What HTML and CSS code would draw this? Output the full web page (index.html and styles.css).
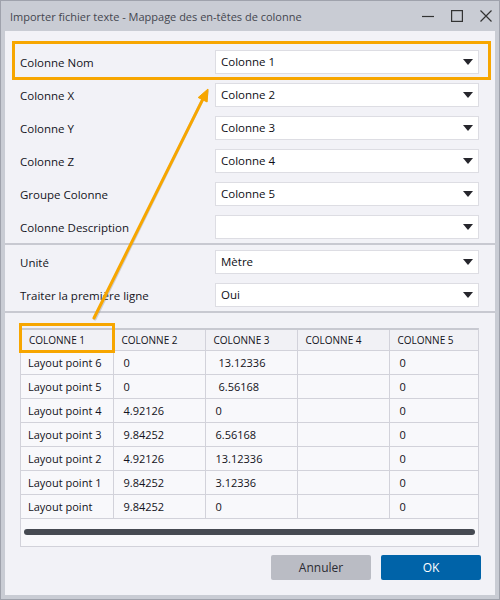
FILE: index.html
```html
<!DOCTYPE html>
<html lang="fr">
  <head>
    <meta charset="UTF-8" />
    <meta name="viewport" content="width=device-width, initial-scale=1.0" />
    <title>Importer fichier texte</title>
    <link rel="stylesheet" href="styles.css">
  </head>
  <body>
    <div class="window">
      <div class="titlebar">
        <span class="title">Importer fichier texte - Mappage des en-têtes de colonne</span>
        <div class="controls">
          <svg width="12" height="12" viewBox="0 0 12 12"><path d="M0 6.5h12" stroke="#333" stroke-width="1.2"/></svg>
          <svg width="12" height="12" viewBox="0 0 12 12"><rect x="0.6" y="0.6" width="10.8" height="10.8" fill="none" stroke="#333" stroke-width="1.2"/></svg>
          <svg width="12" height="12" viewBox="0 0 12 12"><path d="M0.5 0.5l11 11M11.5 0.5l-11 11" stroke="#333" stroke-width="1.2"/></svg>
        </div>
      </div>

      <div class="content">
        <div class="fields">
          <div class="row"><label>Colonne Nom</label><div class="select">Colonne 1</div></div>
          <div class="row"><label>Colonne X</label><div class="select">Colonne 2</div></div>
          <div class="row"><label>Colonne Y</label><div class="select">Colonne 3</div></div>
          <div class="row"><label>Colonne Z</label><div class="select">Colonne 4</div></div>
          <div class="row"><label>Groupe Colonne</label><div class="select">Colonne 5</div></div>
          <div class="row"><label>Colonne Description</label><div class="select"></div></div>
        </div>

        <div class="sep"></div>

        <div class="fields options">
          <div class="row"><label>Unité</label><div class="select">Mètre</div></div>
          <div class="row"><label>Traiter la première ligne</label><div class="select">Oui</div></div>
        </div>

        <div class="sep"></div>

        <div class="grid">
          <table>
            <colgroup><col class="c"><col class="c"><col class="c"><col class="c"><col></colgroup>
            <thead>
              <tr><th>COLONNE 1</th><th>COLONNE 2</th><th>COLONNE 3</th><th>COLONNE 4</th><th>COLONNE 5</th></tr>
            </thead>
            <tbody>
              <tr><td class="first">Layout point 6</td><td>0</td><td class="ind">13.12336</td><td></td><td>0</td></tr>
              <tr><td class="first">Layout point 5</td><td>0</td><td class="ind">6.56168</td><td></td><td>0</td></tr>
              <tr><td class="first">Layout point 4</td><td>4.92126</td><td>0</td><td></td><td>0</td></tr>
              <tr><td class="first">Layout point 3</td><td>9.84252</td><td>6.56168</td><td></td><td>0</td></tr>
              <tr><td class="first">Layout point 2</td><td>4.92126</td><td>13.12336</td><td></td><td>0</td></tr>
              <tr><td class="first">Layout point 1</td><td>9.84252</td><td>3.12336</td><td></td><td>0</td></tr>
              <tr><td class="first">Layout point</td><td>9.84252</td><td>0</td><td></td><td>0</td></tr>
            </tbody>
          </table>
          <div class="hscroll"><div class="thumb"></div></div>
        </div>

        <div class="buttons">
          <button class="btn cancel">Annuler</button>
          <button class="btn ok">OK</button>
        </div>

        <!-- annotation overlays -->
        <div class="mark mark-row"></div>
        <div class="mark mark-head"></div>
      </div>

      <svg class="arrow" width="500" height="600" viewBox="0 0 500 600">
        <g class="arrow-shadow">
          <path d="M95 319 L202.6 99.7" stroke="#8a8a8a" stroke-width="3" stroke-linecap="round"/>
          <path d="M209 90 L207.1 102 L198.2 97.5 Z" fill="#8a8a8a"/>
        </g>
        <path d="M94 318 L202.6 99.7" stroke="#f7a600" stroke-width="3" stroke-linecap="round"/>
        <path d="M208 89 L207.1 102 L198.2 97.5 Z" fill="#f7a600" stroke="#f7a600" stroke-width="1" stroke-linejoin="round"/>
      </svg>
    </div>
  </body>
</html>
```
FILE: styles.css
```css
* {
  margin: 0;
  padding: 0;
  box-sizing: border-box;
}

body {
  font-family: "Open Sans", "Noto Sans", sans-serif;
  background: #c9ccd4;
}

.window {
  position: relative;
  width: 500px;
  height: 600px;
  display: flex;
  flex-direction: column;
  background: #c9ccd4;
  border: 1px solid #9fa2ac;
}

.titlebar {
  height: 30px;
  display: flex;
  align-items: center;
  justify-content: space-between;
  padding: 0 7px 0 9px;
}

.title {
  font-size: 11px;
  color: #44464f;
}

.controls {
  display: flex;
  gap: 17px;
  align-items: center;
}

.controls svg {
  display: block;
}

.content {
  position: relative;
  flex: 1;
  margin: 0 4px 4px 4px;
  background: #f2f2f7;
  padding-top: 19px;
}

.fields {
  display: flex;
  flex-direction: column;
  gap: 9px;
  padding: 0 15px;
}

.row {
  display: flex;
  align-items: center;
  height: 24px;
}

.row label {
  width: 195px;
  font-size: 11.5px;
  color: #14141c;
}

.select {
  position: relative;
  width: 264px;
  height: 24px;
  background: white;
  border: 1px solid #dddde3;
  font-size: 11.5px;
  color: #0e0e14;
  line-height: 22px;
  padding-left: 5px;
}

.select::after {
  content: "";
  position: absolute;
  right: 5px;
  top: 8px;
  border-left: 5px solid transparent;
  border-right: 5px solid transparent;
  border-top: 6px solid #26262c;
}

.sep {
  height: 2px;
  background: #c8c9d1;
  margin: 4px 0 5px;
}

.fields + .sep + .grid {
  margin-top: 15px;
}

.grid {
  margin: 0 16px 0 15px;
  border: 1px solid #d2d2da;
  border-top: 2px solid #c8c9d1;
  background: #f8f8fb;
}

.grid table {
  width: 100%;
  border-collapse: collapse;
  table-layout: fixed;
}

.grid col.c {
  width: 92px;
}

.grid th {
  height: 20px;
  text-align: left;
  font-size: 10px;
  font-weight: normal;
  color: #121220;
  background: #f1f1f5;
  padding-left: 8px;
  border-right: 1px solid #d2d2da;
  border-bottom: 1px solid #d2d2da;
}

.grid td {
  height: 24px;
  font-size: 11px;
  color: #121220;
  padding-left: 10px;
  border-right: 1px solid #d2d2da;
  border-bottom: 1px solid #d2d2da;
  white-space: nowrap;
}

.grid th:last-child,
.grid td:last-child {
  border-right: none;
}

.grid td.first {
  padding-left: 7px;
}

.grid td.ind {
  padding-left: 13px;
}

.hscroll {
  height: 27px;
  padding: 10px 3px 0;
}

.thumb {
  height: 6px;
  border-radius: 3px;
  background: #464a52;
}

.buttons {
  display: flex;
  justify-content: flex-end;
  gap: 10px;
  padding: 8px 14px 0 0;
}

.btn {
  width: 100px;
  height: 25px;
  border: none;
  border-radius: 2px;
  font-family: "Open Sans", "Noto Sans", sans-serif;
  font-size: 12px;
}

.btn.cancel {
  background: #babcc4;
  color: #2b2b33;
}

.btn.ok {
  background: #0063a8;
  color: white;
}

.mark {
  position: absolute;
  border: 3px solid #f7a600;
}

.mark-row {
  left: 7px;
  top: 10px;
  width: 479px;
  height: 39px;
}

.mark-head {
  left: 14px;
  top: 292px;
  width: 96px;
  height: 30px;
}

.arrow {
  position: absolute;
  left: -1px;
  top: -1px;
  pointer-events: none;
}

.arrow-shadow {
  opacity: 0.35;
}
```
